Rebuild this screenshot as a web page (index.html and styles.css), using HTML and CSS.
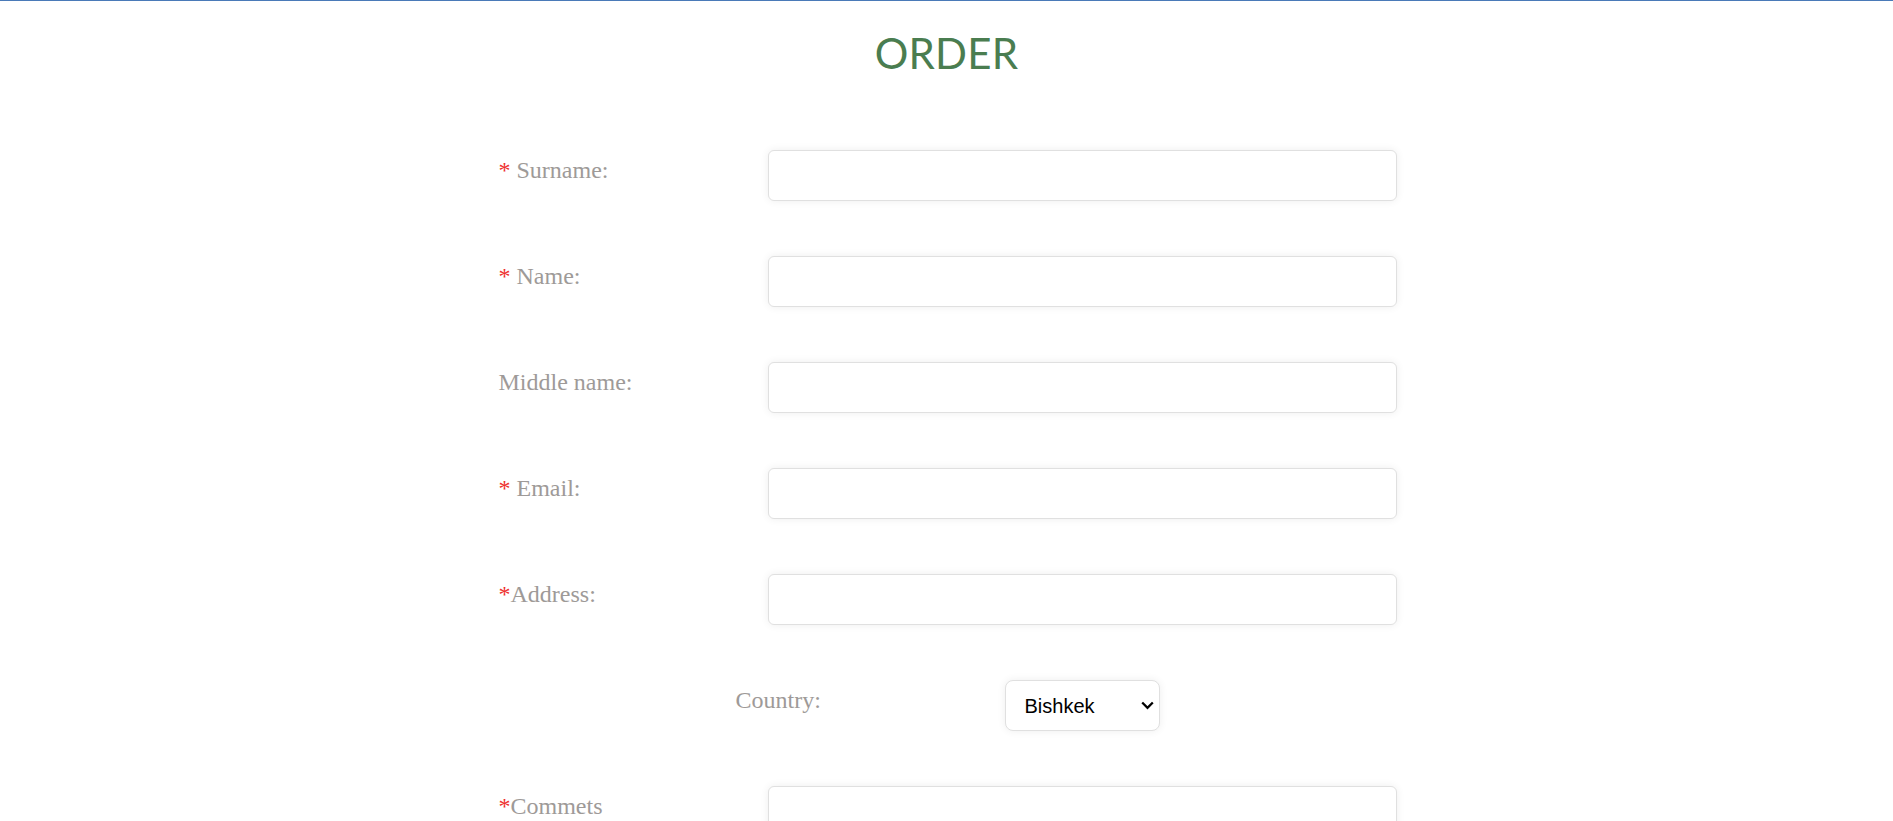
FILE: index.html
```html
<!DOCTYPE html>
<html lang="en">
<head>
<meta charset="utf-8">
<title>Order</title>
<link rel="stylesheet" href="styles.css">
</head>
<body>
<div class="page">
  <h1 class="title">ORDER</h1>
  <form class="order-form">
    <div class="row">
      <label class="label"><span class="req">*</span> Surname:</label>
      <input class="field" type="text">
    </div>
    <div class="row">
      <label class="label"><span class="req">*</span> Name:</label>
      <input class="field" type="text">
    </div>
    <div class="row">
      <label class="label">Middle name:</label>
      <input class="field" type="text">
    </div>
    <div class="row">
      <label class="label"><span class="req">*</span> Email:</label>
      <input class="field" type="email">
    </div>
    <div class="row">
      <label class="label"><span class="req">*</span>Address:</label>
      <input class="field" type="text">
    </div>
    <div class="row row-center">
      <label class="label">Country:</label>
      <div class="select-wrap">
        <select class="select">
          <option>Bishkek</option>
        </select>
        <svg class="chevron" width="13" height="9" viewBox="0 0 13 9"><path d="M1.2 1.5 L6.5 6.8 L11.8 1.5" fill="none" stroke="#000" stroke-width="2.3"/></svg>
      </div>
    </div>
    <div class="row">
      <label class="label"><span class="req">*</span>Commets</label>
      <textarea class="field area"></textarea>
    </div>
  </form>
</div>
</body>
</html>
```

FILE: styles.css
```css
* { box-sizing: border-box; }
html, body { margin: 0; padding: 0; background: #fff; }
body {
  border-top: 1px solid #4a7ab8;
  font-family: "Liberation Serif", "Times New Roman", serif;
}
.page { width: 100%; }
.title {
  margin: 27px 0 0;
  text-align: center;
  font-family: Lato, "Liberation Sans", sans-serif;
  font-weight: 400;
  font-size: 42px;
  line-height: 50px;
  color: #4a7d50;
  letter-spacing: 0.2px;
}
.order-form {
  width: 900px;
  margin: 72px auto 0;
  display: flex;
  flex-direction: column;
  gap: 55px;
}
.row {
  display: flex;
  align-items: flex-start;
}
.row-center {
  justify-content: center;
  width: 1893px;
  margin-left: -496.5px;
}
.label {
  flex: 0 0 271px;
  width: 271px;
  padding-left: 2px;
  font-size: 24px;
  line-height: 40px;
  color: #9e9a98;
}
.req { color: #ee2f2f; }
.field {
  flex: 0 0 629px;
  width: 629px;
  height: 51px;
  border: 1px solid #e0e0e0;
  border-radius: 6px;
  box-shadow: 0 0 9px rgba(0, 0, 0, 0.07);
  background: #fff;
  outline: none;
  padding: 0 12px;
  font-size: 18px;
}
.area {
  height: 120px;
  resize: none;
}
.select-wrap {
  position: relative;
  width: 155px;
  height: 51px;
}
.select {
  appearance: none;
  -webkit-appearance: none;
  width: 155px;
  height: 51px;
  border: 1px solid #e0e0e0;
  border-radius: 8px;
  box-shadow: 0 0 9px rgba(0, 0, 0, 0.07);
  background: #fff;
  padding: 0 0 0 19px;
  font-family: "Liberation Sans", Arial, sans-serif;
  font-size: 20px;
  color: #000;
  outline: none;
}
.chevron {
  position: absolute;
  left: 136px;
  top: 21px;
  pointer-events: none;
}
```
